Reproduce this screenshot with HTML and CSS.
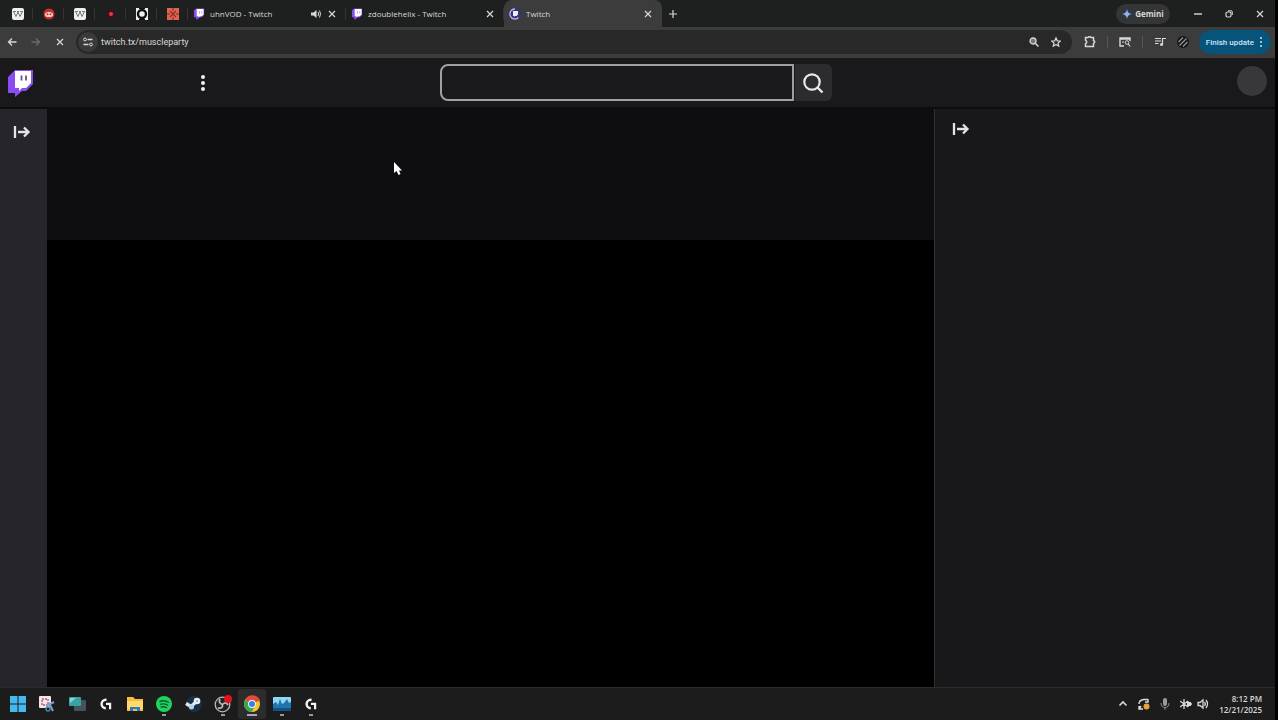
FILE: index.html
```html
<!DOCTYPE html>
<html lang="en">
<head>
    <meta charset="UTF-8">
    <meta name="viewport" content="width=device-width, initial-scale=1.0">
    <title>Twitch</title>
    <link rel="stylesheet" href="styles.css">
</head>
<body>

    <svg class="defs" aria-hidden="true">
        <symbol id="glitch" viewBox="0 0 24 26">
            <path d="M1 5 L6 1 H23 V15 L18 20 H13 L8 25 H6 V20 H1 Z" fill="#8a4df0"/>
            <path d="M7 2 H22 V14 L18 18 H14 L11 21 V18 H7 Z" fill="#fff"/>
            <path d="M13 7 V12 M18 7 V12" stroke="#b79ce8" stroke-width="2"/>
        </symbol>
        <symbol id="close" viewBox="0 0 8 8">
            <path d="M1 1 L7 7 M7 1 L1 7" stroke="currentColor" stroke-width="1.2"/>
        </symbol>
        <symbol id="wiki" viewBox="0 0 12 12">
            <rect width="12" height="12" rx="2" fill="#f0f0f0"/>
            <path d="M1.5 3.5 L4 8.5 L6 4 L8 8.5 L10.5 3.5 M1 3.5 H4 M5 3.5 H7 M8 3.5 H11" fill="none" stroke="#777" stroke-width="1"/>
        </symbol>
        <symbol id="collapse" viewBox="0 0 18 14">
            <path d="M2 1 V13 M5 7 H15 M11 2.5 L15.5 7 L11 11.5" fill="none" stroke="#e4e4e6" stroke-width="2.3"/>
        </symbol>
        <symbol id="ghub" viewBox="0 0 14 14">
            <path d="M7.5 2.8 H6.8 A4.2 4.2 0 0 0 6.8 11.2" fill="none" stroke="#f4f4f4" stroke-width="2.4"/>
            <path d="M7 5.8 H12.2 V12.2 H10 V8 H7 Z" fill="#f4f4f4"/>
        </symbol>
    </svg>

    <!-- Browser tabs -->
    <div class="tab-strip">
        <div class="pinned">
            <a href="#" aria-label="Wiki"><svg class="fav"><use href="#wiki"/></svg></a>
            <a href="#" aria-label="Reddit">
                <svg class="fav" viewBox="0 0 12 12"><circle cx="6" cy="6" r="5.5" fill="#c9302c"/><ellipse cx="6" cy="6.5" rx="4" ry="2.6" fill="#f3d6d4"/><circle cx="4.5" cy="6.2" r="1" fill="#c9302c"/><circle cx="7.5" cy="6.2" r="1" fill="#c9302c"/></svg>
            </a>
            <a href="#" aria-label="Wiki"><svg class="fav"><use href="#wiki"/></svg></a>
            <a href="#" aria-label="Record">
                <svg class="fav" viewBox="0 0 12 12"><circle cx="6" cy="6" r="4" fill="#4a0c14"/><circle cx="6" cy="6" r="2" fill="#d8404c"/></svg>
            </a>
            <a href="#" aria-label="Player">
                <svg class="fav" viewBox="0 0 12 12"><rect width="12" height="12" fill="#efefef"/><circle cx="6" cy="6" r="4" fill="#efefef" stroke="#111" stroke-width="2.4"/><path d="M3 0 H9 M3 12 H9" stroke="#111" stroke-width="2"/></svg>
            </a>
            <a href="#" aria-label="Puzzle">
                <svg class="fav" viewBox="0 0 12 12"><rect width="12" height="12" fill="#e0654f"/><path d="M3 3 L9 9 M9 3 L3 9" stroke="#8d2f28" stroke-width="1.4"/><path d="M6 0 V3 M6 9 V12 M0 6 H3 M9 6 H12" stroke="#7a2a26"/></svg>
            </a>
        </div>
        <div class="tab">
            <svg class="fav"><use href="#glitch"/></svg>
            <span class="tab-title">uhnVOD - Twitch</span>
            <button type="button" class="tab-button" aria-label="Mute tab">
                <svg class="small" viewBox="0 0 10 10"><path d="M0 3.5 H2.5 L5.5 1 V9 L2.5 6.5 H0 Z" fill="currentColor"/><path d="M7 3 Q8.3 5 7 7 M8.5 1.5 Q10.5 5 8.5 8.5" fill="none" stroke="currentColor"/></svg>
            </button>
            <button type="button" class="tab-button" aria-label="Close tab"><svg class="x"><use href="#close"/></svg></button>
        </div>
        <div class="tab">
            <svg class="fav"><use href="#glitch"/></svg>
            <span class="tab-title">zdoublehelix - Twitch</span>
            <button type="button" class="tab-button" aria-label="Close tab"><svg class="x"><use href="#close"/></svg></button>
        </div>
        <div class="tab active">
            <svg class="fav" viewBox="0 0 12 12"><circle cx="6" cy="6" r="5.5" fill="#37317e"/><path d="M9.5 9.5 A5 5 0 1 1 6 1" fill="none" stroke="#b9b3f2" stroke-width="1.3"/><path d="M4 3 H9 V6.5 L7.5 8 H6 L5 9 V8 H4 Z" fill="#efecff"/></svg>
            <span class="tab-title">Twitch</span>
            <button type="button" class="tab-button" aria-label="Close tab"><svg class="x"><use href="#close"/></svg></button>
        </div>
        <button type="button" class="new-tab" aria-label="New tab">
            <svg class="x" viewBox="0 0 8 8"><path d="M4 0 V8 M0 4 H8" stroke="currentColor" stroke-width="1.2"/></svg>
        </button>
        <div class="window-controls">
            <button type="button" class="gemini">
                <svg class="small" viewBox="0 0 10 10"><path d="M5 0 Q5.5 4.5 10 5 Q5.5 5.5 5 10 Q4.5 5.5 0 5 Q4.5 4.5 5 0 Z" fill="#8eb4f0"/><path d="M5 1 Q5.5 4.5 9 5 L6 3 Z" fill="#3156d8"/></svg>
                Gemini
            </button>
            <button type="button" class="window-button" aria-label="Minimize"><svg class="x" viewBox="0 0 8 8"><path d="M0 4 H8" stroke="currentColor" stroke-width="1.4"/></svg></button>
            <button type="button" class="window-button" aria-label="Restore"><svg class="x" viewBox="0 0 8 8"><rect x="1" y="2" width="5" height="5" rx="1.5" fill="none" stroke="currentColor" stroke-width="1.2"/><path d="M3 .8 H6 Q7.3 .8 7.3 2 V5" fill="none" stroke="currentColor"/></svg></button>
            <button type="button" class="window-button" aria-label="Close"><svg class="x"><use href="#close"/></svg></button>
        </div>
    </div>

    <!-- Address bar -->
    <div class="toolbar">
        <button type="button" class="nav-button" aria-label="Back"><svg class="small" viewBox="0 0 10 10"><path d="M9.5 5 H1.5 M5 1.5 L1.5 5 L5 8.5" fill="none" stroke="currentColor" stroke-width="1.3"/></svg></button>
        <button type="button" class="nav-button" aria-label="Forward" disabled><svg class="small" viewBox="0 0 10 10"><path d="M.5 5 H8.5 M5 1.5 L8.5 5 L5 8.5" fill="none" stroke="currentColor" stroke-width="1.3"/></svg></button>
        <button type="button" class="nav-button" aria-label="Stop"><svg class="x"><use href="#close"/></svg></button>
        <div class="address">
            <button type="button" class="site-info" aria-label="Site information"><svg class="small" viewBox="0 0 10 10"><path d="M4.5 2.5 H9.5 M.5 7.5 H5.5" stroke="currentColor" stroke-width="1.3"/><circle cx="2" cy="2.5" r="1.4" fill="none" stroke="currentColor"/><circle cx="8" cy="7.5" r="1.4" fill="none" stroke="currentColor"/></svg></button>
            <input type="text" class="url" aria-label="Address" value="twitch.tx/muscleparty">
            <button type="button" class="address-button" aria-label="Zoom"><svg class="small" viewBox="0 0 10 10"><circle cx="4" cy="4" r="3" fill="#777" stroke="currentColor" stroke-width="1.3"/><path d="M6.3 6.3 L9.5 9.5" stroke="currentColor" stroke-width="1.5"/></svg></button>
            <button type="button" class="address-button" aria-label="Bookmark"><svg class="small" viewBox="0 0 10 10"><path d="M5 .8 L6.2 3.8 L9.4 4 L7 6.1 L7.8 9.2 L5 7.5 L2.2 9.2 L3 6.1 L.6 4 L3.8 3.8 Z" fill="none" stroke="currentColor" stroke-width="1.2"/></svg></button>
        </div>
        <div class="extensions">
            <button type="button" class="extension" aria-label="Extensions"><svg class="medium" viewBox="0 0 12 12"><path d="M1.5 1.5 H4 Q5.5 0 7 1.5 H9.5 V4.5 Q12 6 9.5 7.5 V10.5 H1.5 V7.8 Q4 6 1.5 4.2 Z" fill="none" stroke="currentColor" stroke-width="1.5"/></svg></button>
            <span class="divider"></span>
            <button type="button" class="extension" aria-label="Side panel"><svg class="medium" viewBox="0 0 12 12"><path d="M5 10 H1 V2 H11 V5 M1 3 H11" fill="none" stroke="currentColor" stroke-width="1.4"/><circle cx="8" cy="6.5" r="1.8" fill="none" stroke="currentColor"/><path d="M9.2 8 L11.2 10.5 M3 6 H5" stroke="currentColor" stroke-width="1.2"/></svg></button>
            <span class="divider"></span>
            <button type="button" class="extension" aria-label="Media"><svg class="medium" viewBox="0 0 12 12"><path d="M1 2.5 H7 M1 5 H7 M1 7.5 H4.5 M8.5 9 V2.5 H12" fill="none" stroke="currentColor" stroke-width="1.2"/><circle cx="7.5" cy="8.5" r="1.5" fill="currentColor"/></svg></button>
            <button type="button" class="extension" aria-label="Profile"><svg class="medium" viewBox="0 0 12 12"><circle cx="6" cy="6" r="6" fill="#171717"/><path d="M1.5 6 L6 1.5 M2.5 9.5 L9.5 2.5 M6 10.5 L10.5 6" stroke="#999" stroke-width="1.1"/></svg></button>
        </div>
        <button type="button" class="update">Finish update
            <svg class="dots" viewBox="0 0 4 12"><circle cx="2" cy="2" r="1" fill="currentColor"/><circle cx="2" cy="6" r="1" fill="currentColor"/><circle cx="2" cy="10" r="1" fill="currentColor"/></svg>
        </button>
    </div>

    <!-- Site header -->
    <header class="site-header">
        <div class="header-left">
            <a href="#" aria-label="Twitch home"><svg class="logo" viewBox="0 0 26 30"><path d="M0 9 L7 2 H25 V16 L18 23 H14 L7 29 V25 H0 Z" fill="#8b4df2"/><path d="M7 3 H23 V15 L18 20 H14 L11 23 V20 H7 Z" fill="#fff"/><path d="M13.5 7.5 V12.5 M18 7.5 V12.5" stroke="#65518e" stroke-width="1.8"/></svg></a>
            <button type="button" class="more" aria-label="More"><svg viewBox="0 0 6 18"><circle cx="3" cy="3" r="2" fill="#f0f0f2"/><circle cx="3" cy="9" r="2" fill="#f0f0f2"/><circle cx="3" cy="15" r="2" fill="#f0f0f2"/></svg></button>
        </div>
        <form class="search">
            <input type="search" class="search-input" aria-label="Search">
            <button type="button" class="search-button" aria-label="Search"><svg viewBox="0 0 22 22"><circle cx="10" cy="10" r="7.7" fill="none" stroke="#e8e8ea" stroke-width="2.2"/><path d="M15.5 15.5 L20.5 20.5" stroke="#e8e8ea" stroke-width="2.4"/></svg></button>
        </form>
        <div class="header-right">
            <button type="button" class="avatar" aria-label="Account"></button>
        </div>
    </header>

    <div class="content">
        <nav class="sidebar">
            <button type="button" class="panel-button" aria-label="Expand"><svg><use href="#collapse"/></svg></button>
        </nav>
        <main class="channel">
            <div class="player"></div>
        </main>
        <aside class="chat">
            <button type="button" class="panel-button" aria-label="Collapse chat"><svg><use href="#collapse"/></svg></button>
        </aside>
    </div>

    <!-- Taskbar -->
    <footer class="taskbar">
        <div class="apps">
            <button type="button" class="app" aria-label="Start"><svg viewBox="0 0 18 18"><path d="M1 1 H8.5 V8.5 H1 Z M9.5 1 H17 V8.5 H9.5 Z M1 9.5 H8.5 V17 H1 Z M9.5 9.5 H17 V17 H9.5 Z" fill="#45b8ee"/></svg></button>
            <button type="button" class="app" aria-label="Snipping Tool"><svg viewBox="0 0 18 18"><rect x="1" y="1" width="12" height="12" rx="1" fill="#eee7ed"/><rect x="4" y="4" width="6" height="6" fill="none" stroke="#c55362" stroke-width="1.4" stroke-dasharray="2 1"/><path d="M8 11 L16 7 M11 8 L15 16" stroke="#7ba2c6" stroke-width="2"/><circle cx="10" cy="14" r="2" fill="none" stroke="#4f7dab" stroke-width="1.4"/></svg></button>
            <button type="button" class="app" aria-label="Task View"><svg viewBox="0 0 18 18"><rect x="6" y="5" width="12" height="11" rx="1" fill="#47535c"/><rect x="1" y="2" width="12" height="9" rx="1" fill="#38a3a7"/><path d="M2 3 H8 L2 8 Z" fill="#80d8d4"/></svg></button>
            <button type="button" class="app" aria-label="G HUB"><svg viewBox="-2 -2 18 18"><use href="#ghub" width="14" height="14"/></svg></button>
            <button type="button" class="app" aria-label="File Explorer"><svg viewBox="0 0 18 18"><path d="M1 2 H7 L9 4 H17 V16 H1 Z" fill="#f5bd42"/><path d="M1 6 H17 V14 H1 Z" fill="#ffda6a"/><path d="M4 16 V12 H14 V16 H11 V14 H7 V16 Z" fill="#287cc1"/></svg></button>
            <button type="button" class="app running" aria-label="Spotify"><svg viewBox="0 0 18 18"><circle cx="9" cy="9" r="8" fill="#20d35e"/><path d="M4.5 6.5 Q9 4.5 14 7.5 M5 9.5 Q9 8 13 10.3 M5.5 12.2 Q9 11 12 13" fill="none" stroke="#10592d" stroke-width="1.4"/></svg></button>
            <button type="button" class="app" aria-label="Steam"><svg viewBox="0 0 18 18"><circle cx="9" cy="9" r="8" fill="#173047"/><path d="M1 8.5 L6 11.5 L12 6" fill="none" stroke="#dce8f0" stroke-width="3.4"/><circle cx="12" cy="6" r="3.3" fill="#e7eff4"/><circle cx="6.5" cy="12" r="2.5" fill="#b6d1df"/><circle cx="12" cy="6" r="1" fill="#8ba5b5"/></svg></button>
            <button type="button" class="app running" aria-label="OBS Studio"><svg viewBox="0 0 18 18"><circle cx="8.5" cy="9.5" r="7.3" fill="#222" stroke="#b8b8b8" stroke-width="1.3"/><path d="M8.5 9.5 Q4 8 6 4 M8.5 9.5 Q12 6 14 10 M8.5 9.5 Q9 14 4 13" fill="none" stroke="#bbb" stroke-width="1.7"/><circle cx="14" cy="4" r="4" fill="#e50f20"/></svg></button>
            <button type="button" class="app current" aria-label="Chrome"><svg viewBox="0 0 18 18"><circle cx="9" cy="9" r="8" fill="#f5c629"/><path d="M9 9 L2.1 5 A8 8 0 0 1 16.9 5.5 Z" fill="#df4b3d"/><path d="M9 9 L2.1 5 A8 8 0 0 0 8.5 17 L12 11 Z" fill="#37a755"/><path d="M9 5 H16.5" stroke="#df4b3d" stroke-width="2"/><circle cx="9" cy="9" r="3.9" fill="#fff"/><circle cx="9" cy="9" r="3" fill="#397fe7"/></svg></button>
            <button type="button" class="app running" aria-label="Task Manager"><svg viewBox="0 0 18 18"><rect x="0" y="2" width="18" height="14" rx="1" fill="#8ed7f5"/><path d="M0 9 L3 7 L5 10 L7 4 L9 9 L11 8 L14 4 L16 8 L18 7 V16 H0 Z" fill="#1f75ad"/><path d="M0 13 H18 V16 H0 Z" fill="#125188"/></svg></button>
            <button type="button" class="app running" aria-label="G HUB"><svg viewBox="-2 -2 18 18"><use href="#ghub" width="14" height="14"/></svg></button>
        </div>
        <div class="tray">
            <button type="button" class="tray-button" aria-label="Hidden icons"><svg class="small" viewBox="0 0 10 10"><path d="M1.5 6.5 L5 3 L8.5 6.5" fill="none" stroke="currentColor" stroke-width="1.6"/></svg></button>
            <button type="button" class="tray-button" aria-label="Update"><svg class="medium" viewBox="0 0 12 12"><path d="M1 6 Q1 2 6 1.5 H10 M10 1 V4 H7 M1 8 V11 H5 M1 11 L3 8" fill="none" stroke="#ddd" stroke-width="1.4"/><circle cx="8.5" cy="8.5" r="3" fill="#eca13a"/></svg></button>
            <button type="button" class="tray-button" aria-label="Microphone"><svg class="medium" viewBox="0 0 12 12"><rect x="4" y="0" width="4" height="8" rx="2" fill="#999"/><path d="M2 5 Q2 9.5 6 9.5 Q10 9.5 10 5 M6 9 V12" fill="none" stroke="#888"/></svg></button>
            <div class="tray-group">
                <button type="button" aria-label="Network"><svg class="medium" viewBox="0 0 12 12"><path d="M4 1 V11 M0 3 L8 9 M0 9 L8 3 M7 6 H12 M8 3 V9" stroke="currentColor" stroke-width="1.3"/><rect x="7" y="4" width="4" height="4" fill="currentColor"/></svg></button>
                <button type="button" aria-label="Volume"><svg class="medium" viewBox="0 0 12 12"><path d="M1 4.5 H3 L6 2 V10 L3 7.5 H1 Z M7.5 4 Q9 6 7.5 8 M9 2 Q12 6 9 10" fill="none" stroke="currentColor" stroke-width="1.3"/></svg></button>
            </div>
            <button type="button" class="clock"><span>8:12 PM</span><span>12/21/2025</span></button>
        </div>
    </footer>

    <!-- Mouse pointer -->
    <svg class="cursor" viewBox="0 0 10 14" aria-hidden="true"><path d="M1 0 V11 L3.5 9 L5.5 13 L7.5 12 L6 8.5 H9 Z" fill="#fff"/></svg>

</body>
</html>
```
FILE: styles.css
```css
* {
    box-sizing: border-box;
}

body {
    display: flex;
    flex-direction: column;
    height: 100vh;
    margin: 0;
    border-right: 3px solid #000;
    background: #18181a;
    color: #d8d8d8;
    font-family: "Open Sans", "Noto Sans", sans-serif;
    font-size: 8px;
    overflow: hidden;
}

button {
    display: flex;
    align-items: center;
    justify-content: center;
    flex: none;
    padding: 0;
    border: none;
    background: none;
    color: inherit;
    font: inherit;
}

input {
    min-width: 0;
    padding: 0;
    border: none;
    outline: none;
    background: none;
    color: inherit;
    font: inherit;
}

svg {
    display: block;
    flex: none;
}

.defs {
    display: none;
}

.fav,
.medium {
    width: 12px;
    height: 12px;
}

.small {
    width: 10px;
    height: 10px;
}

.x {
    width: 8px;
    height: 8px;
}

/* Tabs */
.tab-strip {
    display: flex;
    flex: none;
    height: 27px;
    background: #1e1f1f;
}

.pinned {
    display: flex;
    padding-left: 2px;
}

.pinned a {
    display: flex;
    align-items: center;
    justify-content: center;
    width: 31px;
    background: linear-gradient(#343434, #343434) no-repeat right center / 1px 12px;
}

.tab {
    display: flex;
    align-items: center;
    width: 158px;
    padding: 0 6px 0 5px;
    background: linear-gradient(#343434, #343434) no-repeat right center / 1px 12px;
}

.tab.active {
    border-radius: 8px 8px 0 0;
    background: #3c3c3c;
}

.tab-title {
    flex: 1;
    padding-left: 5px;
    white-space: nowrap;
}

.tab-button {
    width: 16px;
    height: 16px;
}

.new-tab {
    width: 22px;
}

.window-controls {
    display: flex;
    align-items: center;
    margin-left: auto;
}

.gemini {
    gap: 3px;
    width: 54px;
    height: 20px;
    margin-right: 12px;
    border-radius: 10px;
    background: #343536;
    font-weight: bold;
}

.window-button {
    width: 31px;
    height: 27px;
}

/* Toolbar */
.toolbar {
    display: flex;
    align-items: flex-start;
    flex: none;
    height: 31px;
    padding-top: 3px;
    background: #3c3c3c;
}

.nav-button {
    width: 24px;
    height: 24px;
}

.nav-button:disabled {
    color: #6a6a6a;
}

.address {
    display: flex;
    align-items: center;
    flex: 1;
    height: 24px;
    margin: 0 12px 0 4px;
    border-radius: 12px;
    background: #282828;
}

.address-button {
    width: 22px;
    height: 24px;
}

.address-button:last-child {
    margin-right: 5px;
}

.site-info {
    width: 20px;
    height: 20px;
    margin: 0 3px 0 2px;
    border-radius: 10px;
    background: #3a3a3a;
}

.url {
    flex: 1;
    font-family: Roboto, sans-serif;
    font-size: 9px;
}

.extensions {
    display: flex;
    align-items: center;
    gap: 11px;
    margin-right: 10px;
}

.extension {
    width: 12px;
    height: 24px;
}

.divider {
    width: 1px;
    height: 12px;
    background: #565656;
}

.update {
    gap: 5px;
    height: 24px;
    margin-right: 4px;
    padding: 0 8px 0 7px;
    border-radius: 12px;
    background: #07537a;
    color: #c9e8fb;
    font-family: Roboto, sans-serif;
    font-weight: 500;
}

.dots {
    width: 4px;
    height: 12px;
}

/* Site header */
.site-header {
    display: grid;
    grid-template-columns: 1fr 392px 1fr;
    align-items: center;
    flex: none;
    height: 51px;
    padding-right: 4px;
    border-bottom: 2px solid #0c0c0d;
    background: #19191b;
}

.header-left {
    display: flex;
    align-items: center;
    justify-content: space-between;
    max-width: 216px;
    padding-left: 8px;
}

.logo {
    width: 26px;
    height: 30px;
}

.more {
    width: 26px;
    height: 30px;
}

.more svg {
    width: 6px;
    height: 18px;
}

.search {
    display: flex;
    gap: 1px;
    height: 37px;
}

.search-input {
    flex: 1;
    padding: 0 10px;
    border: 2px solid #a0a0a2;
    border-radius: 8px 0 0 8px;
    font-size: 14px;
}

.search-button {
    width: 37px;
    border-radius: 0 6px 6px 0;
    background: #2c2c2f;
}

.search-button svg {
    width: 22px;
    height: 22px;
}

.header-right {
    display: flex;
    justify-content: flex-end;
    padding: 0 4px 4px 0;
}

.avatar {
    width: 30px;
    height: 30px;
    border-radius: 50%;
    background: #38383b;
}

/* Page */
.content {
    display: flex;
    flex: 1;
    min-height: 0;
}

.sidebar {
    width: 47px;
    padding: 12px 10px;
    background: #26252c;
}

.channel {
    display: flex;
    flex: 1;
    background: #0e0e10;
}

.player {
    flex: 1;
    margin-top: 131px;
    background: #000;
}

.chat {
    width: 341px;
    padding: 9px 14px;
    border-left: 1px solid #303033;
    background: #18181a;
}

.panel-button {
    width: 24px;
    height: 22px;
}

.panel-button svg {
    width: 18px;
    height: 14px;
}

/* Taskbar */
.taskbar {
    display: flex;
    align-items: center;
    justify-content: space-between;
    flex: none;
    height: 33px;
    border-top: 1px solid #2b2b2b;
    background: #1c1c1c;
}

.apps {
    display: flex;
    justify-content: space-between;
    width: 325px;
    padding-left: 4px;
}

.app {
    width: 28px;
    height: 30px;
    border-radius: 3px;
}

.app svg {
    width: 18px;
    height: 18px;
}

.app.running {
    background: linear-gradient(#999, #999) no-repeat center bottom 3px / 4px 2px;
}

.app.current {
    background: linear-gradient(#aaa, #aaa) no-repeat center bottom 3px / 10px 2px, #2c2c2c;
}

.tray {
    display: flex;
    align-items: center;
    padding-right: 13px;
}

.tray-button {
    width: 21px;
    height: 24px;
}

.tray-group {
    display: flex;
    gap: 5px;
    padding: 0 10px 0 5px;
}

.clock {
    flex-direction: column;
    align-items: flex-end;
    line-height: 11px;
    font-weight: 600;
}

.cursor {
    position: absolute;
    top: 162px;
    left: 393px;
    width: 10px;
    height: 14px;
}
```
